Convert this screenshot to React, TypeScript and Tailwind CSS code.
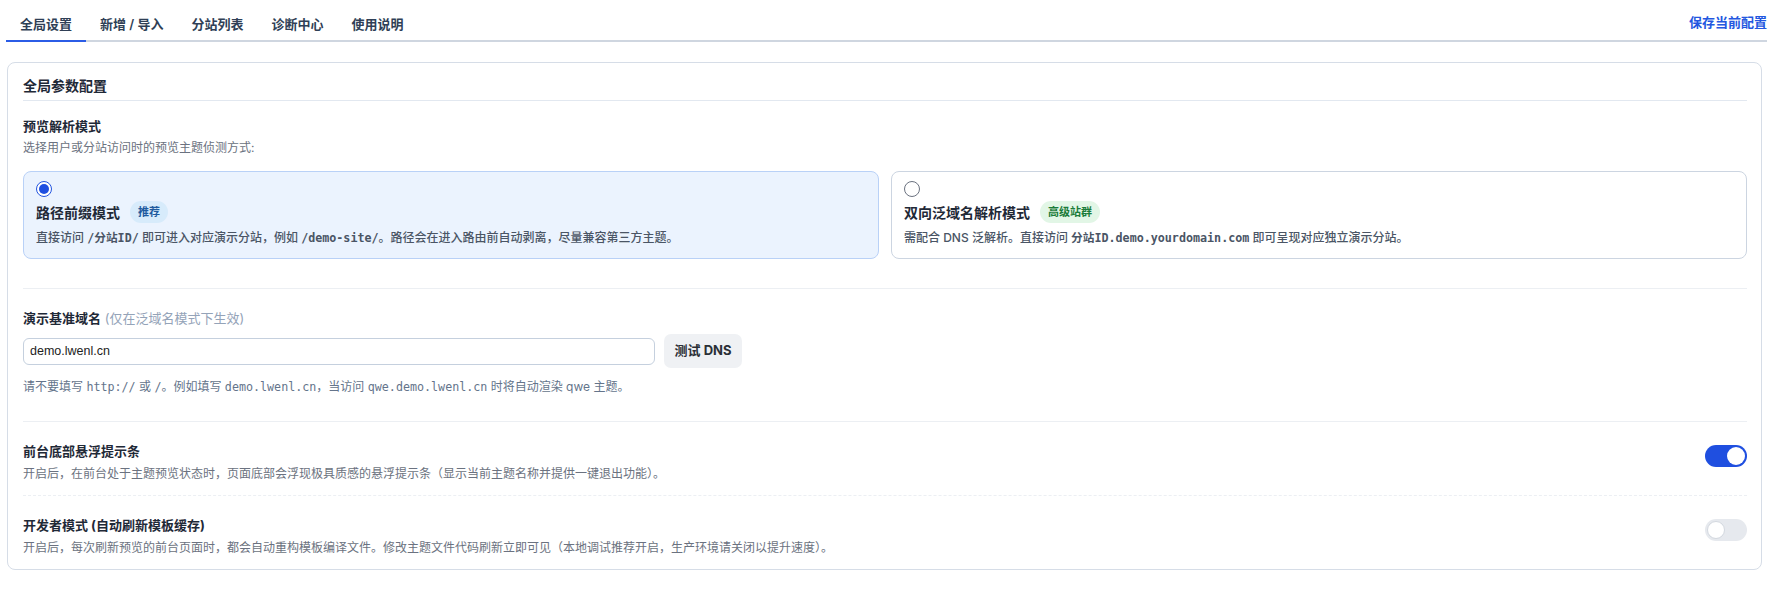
import { useState } from 'react';

const tabs = ['全局设置', '新增 / 导入', '分站列表', '诊断中心', '使用说明'];

function Mono({ children, bold }: { children: React.ReactNode; bold?: boolean }) {
  return (
    <code
      className={`font-['DejaVu_Sans_Mono','Noto_Sans_CJK_SC',monospace] text-[11.7px] ${bold ? 'font-semibold' : 'font-normal'}`}
    >
      {children}
    </code>
  );
}

function Radio({ checked }: { checked: boolean }) {
  return checked ? (
    <span className="w-4 h-4 rounded-full border-[1.5px] border-[#2355e0] bg-white flex items-center justify-center">
      <span className="w-[10px] h-[10px] rounded-full bg-[#1f4fe0]" />
    </span>
  ) : (
    <span className="w-4 h-4 rounded-full border border-[#6b7280] bg-white block" />
  );
}

function Toggle({ on }: { on: boolean }) {
  return (
    <span
      className={`mt-[3px] w-[42px] h-[22px] rounded-full flex items-center px-[2px] flex-shrink-0 ${
        on ? 'bg-[#1f4fe0] justify-end' : 'bg-[#e6e9ee] justify-start'
      }`}
    >
      <span className={`w-[18px] h-[18px] rounded-full bg-white ${on ? '' : 'border border-[#d3d8df]'}`} />
    </span>
  );
}

export default function App() {
  const [active] = useState(0);

  return (
    <div className="min-h-screen bg-white pl-[6px] pr-[10px] text-[#1f2937] font-['Inter','Noto_Sans_CJK_SC',sans-serif]">
      {/* Tabs */}
      <div className="flex items-end justify-between border-b-2 border-[#cfd6e0]">
        <div className="flex">
          {tabs.map((t, i) => (
            <button
              key={t}
              className={`px-[14px] pt-[15px] pb-[7px] leading-[18px] text-[13px] font-semibold text-[#2f3f56] border-b-2 -mb-[2px] ${
                i === active ? 'border-[#2b5ce6]' : 'border-transparent'
              }`}
            >
              {t}
            </button>
          ))}
        </div>
        <button className="pb-[9px] leading-[18px] text-[13px] font-bold text-[#2357e0]">保存当前配置</button>
      </div>

      {/* Card */}
      <div className="mt-[20px] ml-[1px] mr-[5px] border border-[#d6dde7] rounded-[8px] pl-[15px] pr-[14px]">
        <div className="pt-[13px] pb-[4px] border-b border-[#e2e8f0]">
          <h2 className="text-[14px] leading-[20px] font-bold text-[#1f2937]">全局参数配置</h2>
        </div>

        {/* Preview mode */}
        <div className="pt-[16px] pb-[29px] border-b border-[#eceff3]">
          <div className="text-[13px] leading-[18px] font-bold">预览解析模式</div>
          <div className="mt-[4px] text-[12px] leading-[18px] text-[#6b7280]">选择用户或分站访问时的预览主题侦测方式:</div>
          <div className="mt-[14px] grid grid-cols-2 gap-[12px]">
            <div className="border border-[#b9d1f7] bg-[#ebf3fe] rounded-[8px] px-[12px] pt-[9px] pb-[11px]">
              <Radio checked />
              <div className="mt-[4px] h-[22px] flex items-center">
                <span className="text-[14px] font-bold text-[#1f2937]">路径前缀模式</span>
                <span className="ml-[10px] h-[22px] px-[8px] rounded-full bg-[#d7ebfb] text-[#1e5a9e] text-[11px] font-bold flex items-center">
                  推荐
                </span>
              </div>
              <div className="mt-[6px] text-[12px] leading-[18px] font-medium text-[#4a5565]">
                直接访问 <Mono bold>/分站ID/</Mono> 即可进入对应演示分站，例如 <Mono bold>/demo-site/</Mono>
                。路径会在进入路由前自动剥离，尽量兼容第三方主题。
              </div>
            </div>
            <div className="border border-[#ccd5e1] bg-white rounded-[8px] px-[12px] pt-[9px] pb-[11px]">
              <Radio checked={false} />
              <div className="mt-[4px] h-[22px] flex items-center">
                <span className="text-[14px] font-bold text-[#1f2937]">双向泛域名解析模式</span>
                <span className="ml-[10px] h-[22px] px-[8px] rounded-full bg-[#e2f6e6] text-[#1b7c3a] text-[11px] font-bold flex items-center">
                  高级站群
                </span>
              </div>
              <div className="mt-[6px] text-[12px] leading-[18px] font-medium text-[#4a5565]">
                需配合 DNS 泛解析。直接访问 <Mono bold>分站ID.demo.yourdomain.com</Mono> 即可呈现对应独立演示分站。
              </div>
            </div>
          </div>
        </div>

        {/* Base domain */}
        <div className="pt-[20px] pb-[25px] border-b border-[#eceff3]">
          <div className="text-[13px] leading-[18px]">
            <span className="font-bold">演示基准域名</span>{' '}
            <span className="text-[#94a3b8]">(仅在泛域名模式下生效)</span>
          </div>
          <div className="mt-[7px] flex items-center">
            <input
              defaultValue="demo.lwenl.cn"
              className="w-[632px] h-[27px] border border-[#c5d0de] rounded-[6px] px-[6px] text-[12.5px] text-[#222] outline-none font-['Liberation_Sans',sans-serif]"
            />
            <button className="ml-[9px] w-[78px] h-[34px] rounded-[7px] bg-[#eff1f4] text-[13px] font-bold text-[#2a2f36]">
              测试 DNS
            </button>
          </div>
          <div className="mt-[10px] text-[12px] leading-[18px] text-[#64748b]">
            请不要填写 <Mono>http://</Mono> 或 <Mono>/</Mono>。例如填写 <Mono>demo.lwenl.cn</Mono>，当访问{' '}
            <Mono>qwe.demo.lwenl.cn</Mono> 时将自动渲染 qwe 主题。
          </div>
        </div>

        {/* Toggles */}
        <div className="pt-[20px] pb-[12px] flex items-start justify-between border-b border-dashed border-[#eceff3]">
          <div>
            <div className="text-[13px] leading-[18px] font-bold">前台底部悬浮提示条</div>
            <div className="mt-[5px] text-[12px] leading-[18px] text-[#6b7280]">
              开启后，在前台处于主题预览状态时，页面底部会浮现极具质感的悬浮提示条（显示当前主题名称并提供一键退出功能）。
            </div>
          </div>
          <Toggle on />
        </div>
        <div className="pt-[20px] pb-[12px] flex items-start justify-between">
          <div>
            <div className="text-[13px] leading-[18px] font-bold">开发者模式 (自动刷新模板缓存)</div>
            <div className="mt-[5px] text-[12px] leading-[18px] text-[#6b7280]">
              开启后，每次刷新预览的前台页面时，都会自动重构模板编译文件。修改主题文件代码刷新立即可见（本地调试推荐开启，生产环境请关闭以提升速度）。
            </div>
          </div>
          <Toggle on={false} />
        </div>
      </div>
    </div>
  );
}
